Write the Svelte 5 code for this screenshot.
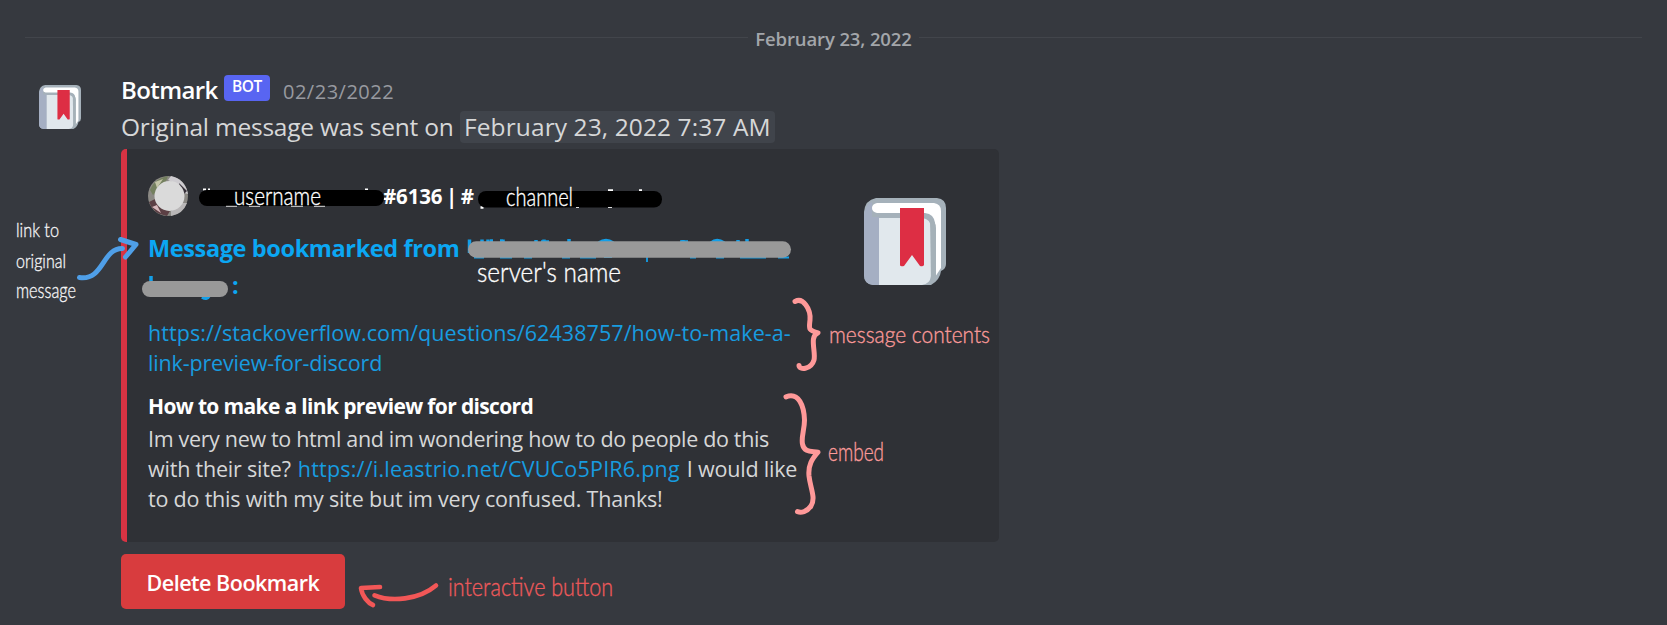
<script>
  const url = ['https://stackoverflow.com/questions/62438757/how-to-make-a-', 'link-preview-for-discord'];

  const notes = [
    { text: 'link to', x: 16, y: 237, w: 43, size: 20, color: '#f4f4f5' },
    { text: 'original', x: 16, y: 268, w: 50, size: 20, color: '#f4f4f5' },
    { text: 'message', x: 16, y: 298, w: 60, size: 21, color: '#f4f4f5' },
    { text: 'username', x: 234, y: 204.5, w: 87, size: 25, color: '#ffffff' },
    { text: 'channel', x: 506, y: 206, w: 67, size: 25, color: '#ffffff' },
    { text: "server's name", x: 477, y: 281.5, w: 144, size: 27, color: '#ffffff' },
    { text: 'message contents', x: 829, y: 343, w: 161, size: 24, color: '#fb9a99' },
    { text: 'embed', x: 828, y: 461, w: 56, size: 26, color: '#fb9a99' },
    { text: 'interactive button', x: 448, y: 596, w: 165, size: 26, color: '#ee595b' }
  ];
</script>

{#snippet book()}
  <svg class="book" viewBox="0 0 82 87" preserveAspectRatio="none">
    <path d="M12 0H73Q82 1 82 10V66Q82 71 77 73Q76 82 67 87H9Q0 86 0 77V14Q1 2 12 0Z" fill="#a5b1ba" />
    <path d="M0 16Q2 6 8 4V19H15V87H9Q0 86 0 77Z" fill="#a5afc3" />
    <path d="M13 5H70Q77 6 77 13V70L71 79V25Q70 16 61 15H13Q8 14 8 10T13 5Z" fill="#fff" />
    <path d="M15 20H58Q67 21 67 30V78Q66 86 58 87H15Z" fill="#e1e8ed" />
    <path d="M66 20Q72 23 72 30V79L67 84Z" fill="#a5b1b8" />
    <path d="M36 10H60V67Q59 69 56 68L48 57L40 68Q36 69 36 67Z" fill="#dd2e44" />
  </svg>
{/snippet}

<main>
  <div class="divider"><span>February 23, 2022</span></div>

  <article class="message">
    <div class="avatar">{@render book()}</div>
    <div class="content">
      <header>
        <span class="name">Botmark</span>
        <span class="tag">BOT</span>
        <time>02/23/2022</time>
      </header>
      <p class="intro"><span>Original message was sent on</span><span class="stamp">February 23, 2022 7:37 AM</span></p>

      <section class="embed">
        <div class="body">
          <div class="author">
            <svg class="face" viewBox="0 0 40 40">
              <circle cx="20" cy="20" r="20" fill="#8b8984" />
              <path d="M2 14Q7 2 20 0L17 8L5 19Z" fill="#74805f" />
              <path d="M7 6L15 3L9 12Z" fill="#c4c5a8" />
              <path d="M23 0Q37 3 40 18L33 16Q29 7 20 4Z" fill="#ceccd0" />
              <path d="M31 7L39 15L34 20Z" fill="#363038" />
              <path d="M1 26L7 23Q12 34 22 35L19 40Q5 38 1 26Z" fill="#5c4045" />
              <path d="M4 31L9 29L13 37Z" fill="#d9b9bd" />
              <path d="M33 27L39 27Q35 38 23 40L23 35Z" fill="#b9b7b8" />
              <circle cx="21.5" cy="20" r="15" fill="#dadada" />
            </svg>
            <span class="discriminator">#6136 | #</span>
          </div>
          <h2><span>Message bookmarked from</span><span class="colon">:</span></h2>
          <div class="url">
            <a href="#link">{url[0]}</a>
            <a class="second" href="#link">{url[1]}</a>
          </div>
          <h3>How to make a link preview for discord</h3>
          <div class="quote">
            <div class="l1">Im very new to html and im wondering how to do people do this</div>
            <div class="l2"><span>with their site?</span> <a href="#image">https://i.leastrio.net/CVUCo5PIR6.png</a> <span>I would like</span></div>
            <div class="l3">to do this with my site but im very confused. Thanks!</div>
          </div>
        </div>
        <div class="thumb">{@render book()}</div>
      </section>

      <button>Delete Bookmark</button>
    </div>
  </article>

  <svg class="markup" viewBox="0 0 1667 625">
    <path d="M203 189.5h3m2 0h2M365 189.5h3" stroke="#fff" stroke-width="2" />
    <rect x="199" y="190" width="185" height="16" rx="8" />
    <path d="M226 206.3h11M249 206.3h11M291 206.3h12M314 206.3h11" stroke="#ddd" stroke-width="1" />
    <path d="M480.500 207.500h3M608 190.500h5M639 190.500h3" stroke="#fff" stroke-width="2.500" />
    <rect x="478" y="191" width="184" height="16.500" rx="8" />
    <path d="M576 207.500h3M608 207.500h4" stroke="#ddd" stroke-width="1" />

    <g stroke="#139fe8" stroke-width="3.500" fill="none">
      <path d="M469.500 239.500V253M482 239.500V244M488 239.500V244M503 239.500V244M490 241H493M500 241H503M536 240V243M544 239.500V244M541 242H549M569 239V244M599 243Q606 238 613 243M683 240V244M680 242H688M711 243Q717 238 724 243M738 240V243M747 239V244" />
      <path d="M474 257.500H484M500 257.500H512M524 257.500H532M562 257.500H570M580 257.500H596M604 257H612M647 257V262M690 257.500H696M716 257.500H724M740 257.500H766M778 257.500H789" stroke-width="1.800" />
      <path d="M151 276V286M202 297Q207 300 209 296" />
    </g>
    <rect x="468" y="241.300" width="323" height="16.400" rx="8.200" fill="#999" />
    <rect x="142" y="281" width="86" height="16" rx="8" fill="#999" />

    <g fill="none" stroke-width="5" stroke-linecap="round" stroke-linejoin="round">
      <path d="M79.500 277.500C104 281 102 248 122.500 248.500M120.500 239.500L136 244.500L125.500 257" stroke="#4f9fe8" />
      <g stroke="#ff9999">
        <path d="M795 301.500C803 297 811 309 810 320C809 329 808 330 818 332.800C809 336 816 352 814 360C811 370 799 370 799 365.500" />
        <path d="M786 396.800C799 392 804 406 804.500 420C804.500 430 801 437 802.500 444C804 453 812 451 818 452.200C812 459 808 465 809 476C810.500 489 816 498 811 506C807 512 801 513 797.500 511.700" />
      </g>
      <path d="M374.500 595.300C391 602 419 600 436 585.500M380 587L361 588C362 596 368 603 373 605" stroke="#f25757" stroke-width="4.600" />
    </g>

    {#each notes as n}
      <text x={n.x} y={n.y} font-size={n.size} fill={n.color} stroke={n.color} textLength={n.w} lengthAdjust="spacingAndGlyphs">{n.text}</text>
    {/each}
  </svg>
</main>

<style>
  :global(body) { background: #36393f; }
  main {
    position: relative;
    box-sizing: border-box;
    width: 1667px;
    height: 625px;
    padding-top: 26px;
    overflow: hidden;
    background: #36393f;
    color: #d6d7d8;
    font-family: "Open Sans", sans-serif;
  }
  .divider {
    display: flex;
    align-items: center;
    margin: 0 25px;
    height: 25px;
    color: #a3a6aa;
    font-size: 18.5px;
    font-weight: 600;
    letter-spacing: -0.12px;
  }
  .divider::before, .divider::after {
    content: "";
    flex: 1;
    height: 1px;
    margin-top: -2px;
    background: #42454b;
  }
  .divider span { padding: 0 7px; }
  .message { display: grid; grid-template-columns: 121px 1fr; margin-top: 24px; }
  .avatar { padding: 10px 0 0 39px; }
  .avatar .book { width: 42px; height: 44px; }
  .book { display: block; width: 82px; height: 87px; }
  .content { display: flex; flex-direction: column; align-items: flex-start; }
  header { display: flex; align-items: center; height: 30px; margin-bottom: 6px; line-height: 30px; }
  .name { width: 103px; color: #fff; font-size: 24px; font-weight: 600; letter-spacing: -0.6px; }
  .tag {
    width: 46px;
    height: 26px;
    margin-top: -4px;
    border-radius: 4px;
    background: #5865f2;
    color: #fff;
    font-size: 15.5px;
    font-weight: 600;
    line-height: 23px;
    text-align: center;
    letter-spacing: -0.4px;
  }
  time { margin: 3px 0 0 13px; color: #989aa0; font-size: 20px; letter-spacing: 0.5px; }
  .intro { display: flex; height: 32px; margin: 0; font-size: 24.5px; line-height: 32px; letter-spacing: -0.22px; white-space: nowrap; }
  .intro span:first-child { width: 339px; }
  .stamp { width: 311px; padding-left: 4px; border-radius: 4px; background: #40444b; letter-spacing: 0.1px; }
  .embed {
    display: flex;
    box-sizing: border-box;
    width: 878px;
    height: 393px;
    margin-top: 6px;
    padding: 27px 53px 27px 21px;
    border-left: 6px solid #d83343;
    border-radius: 5px;
    background: #2f3136;
    justify-content: space-between;
  }
  .body { width: 660px; white-space: nowrap; }
  .thumb { padding-top: 22px; }
  .author { display: flex; align-items: center; height: 40px; color: #fff; }
  .face { width: 40px; height: 40px; }
  .discriminator { margin-left: 195px; font-size: 20.5px; font-weight: 700; word-spacing: -1.5px; letter-spacing: -0.15px; }
  h2, h3 { margin: 0; font-weight: 700; }
  h2 { margin-top: 14px; color: #0ba7f3; font-size: 23.5px; line-height: 37px; letter-spacing: -0.38px; }
  h2 span { display: block; }
  .colon { padding-left: 84px; }
  a { color: #179ce0; text-decoration: none; }
  .url { display: grid; margin-top: 14px; font-size: 21.5px; line-height: 30px; letter-spacing: 0.07px; }
  .second { letter-spacing: -0.16px; }
  h3 { margin-top: 14px; color: #fff; font-size: 21px; line-height: 28px; letter-spacing: -0.65px; }
  .quote { margin-top: 4px; font-size: 21.5px; line-height: 30px; letter-spacing: -0.33px; }
  .l2 { display: flex; gap: 7px; }
  .l2 span { letter-spacing: -0.2px; }
  .l2 a { letter-spacing: 0.21px; }
  .l3 { letter-spacing: -0.2px; }
  button {
    width: 224px;
    height: 55px;
    margin-top: 12px;
    padding: 0;
    border: 0;
    border-radius: 5px;
    background: #d83c3e;
    color: #fff;
    font: 600 21.5px/57px "Open Sans", sans-serif;
    letter-spacing: -0.5px;
  }
  .markup { position: absolute; inset: 0; width: 1667px; height: 625px; pointer-events: none; }
  .markup text { font-family: Lato, sans-serif; font-weight: 300; stroke-width: 0.35px; }
</style>
